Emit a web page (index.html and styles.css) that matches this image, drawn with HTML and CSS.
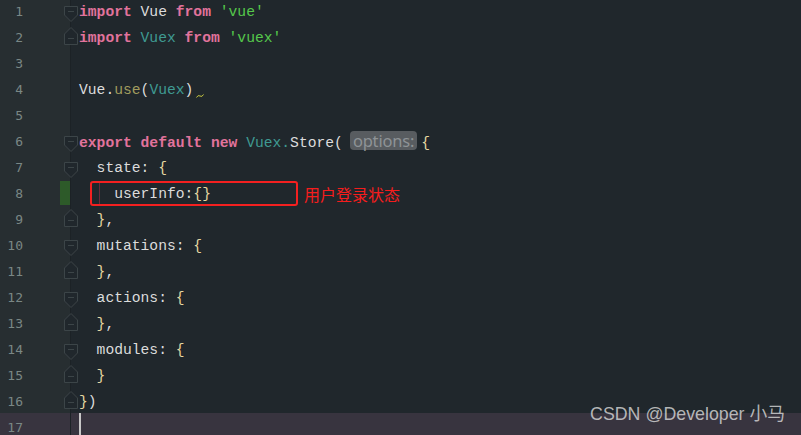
FILE: index.html
```html
<!DOCTYPE html>
<html lang="zh-CN">
    <head>
        <meta charset="UTF-8" />
        <meta name="viewport" content="width=device-width, initial-scale=1.0" />
        <title>store/index.js</title>
        <link rel="stylesheet" href="styles.css">
    </head>

    <body>
        <div class="editor">
            <div class="row">
                <div class="gutter"><span class="num">1</span><span class="fold fold_open"></span></div>
                <div class="code"><span class="kw">import</span> Vue <span class="kw">from</span> <span class="str">'vue'</span></div>
            </div>
            <div class="row">
                <div class="gutter"><span class="num">2</span><span class="fold fold_close"></span></div>
                <div class="code"><span class="kw">import</span> <span class="cls">Vuex</span> <span class="kw">from</span> <span class="str">'vuex'</span></div>
            </div>
            <div class="row">
                <div class="gutter"><span class="num">3</span></div>
                <div class="code"></div>
            </div>
            <div class="row">
                <div class="gutter"><span class="num">4</span></div>
                <div class="code">Vue.<span class="fn">use</span>(<span class="cls">Vuex</span>)<span class="warn"></span></div>
            </div>
            <div class="row">
                <div class="gutter"><span class="num">5</span></div>
                <div class="code"></div>
            </div>
            <div class="row">
                <div class="gutter"><span class="num">6</span><span class="fold fold_open"></span></div>
                <div class="code"><span class="kw">export default new</span> <span class="cls">Vuex.</span>Store(<span class="hint">options:</span><span class="br">{</span></div>
            </div>
            <div class="row">
                <div class="gutter"><span class="num">7</span><span class="fold fold_open"></span></div>
                <div class="code">  state: <span class="br">{</span></div>
            </div>
            <div class="row">
                <div class="gutter"><span class="num">8</span><span class="changed"></span></div>
                <div class="code code_note"><span class="guide"></span>    userInfo:<span class="br">{}</span><span class="note_box"></span><span class="note_text">用户登录状态</span></div>
            </div>
            <div class="row">
                <div class="gutter"><span class="num">9</span><span class="fold fold_close"></span></div>
                <div class="code">  <span class="br">}</span>,</div>
            </div>
            <div class="row">
                <div class="gutter"><span class="num">10</span><span class="fold fold_open"></span></div>
                <div class="code">  mutations: <span class="br">{</span></div>
            </div>
            <div class="row">
                <div class="gutter"><span class="num">11</span><span class="fold fold_close"></span></div>
                <div class="code">  <span class="br">}</span>,</div>
            </div>
            <div class="row">
                <div class="gutter"><span class="num">12</span><span class="fold fold_open"></span></div>
                <div class="code">  actions: <span class="br">{</span></div>
            </div>
            <div class="row">
                <div class="gutter"><span class="num">13</span><span class="fold fold_close"></span></div>
                <div class="code">  <span class="br">}</span>,</div>
            </div>
            <div class="row">
                <div class="gutter"><span class="num">14</span><span class="fold fold_open"></span></div>
                <div class="code">  modules: <span class="br">{</span></div>
            </div>
            <div class="row">
                <div class="gutter"><span class="num">15</span><span class="fold fold_close"></span></div>
                <div class="code">  <span class="br">}</span></div>
            </div>
            <div class="row">
                <div class="gutter"><span class="num">16</span><span class="fold fold_close"></span></div>
                <div class="code"><span class="br">}</span>)</div>
            </div>
            <div class="row row_current">
                <div class="gutter"><span class="num">17</span></div>
                <div class="code"><span class="caret"></span></div>
            </div>
        </div>

        <div class="watermark">CSDN @Developer 小马</div>
    </body>
</html>
```

FILE: styles.css
```css
:root {
    --bg: #20272c;
    --gutter: #272e31;
    --current: #38343f;
    --fold: #3c4548;
}

body {
    margin: 0;
    background-color: var(--bg);
    overflow: hidden;
    height: 435px;
    position: relative;
}

.editor {
    margin-top: -3px;
}

.row {
    display: grid;
    grid-template-columns: 71px 1fr;
    height: 26px;
}

.gutter {
    position: relative;
    background-color: var(--gutter);
    border-right: 1px solid #1c2226;
}

.num {
    display: block;
    width: 23px;
    text-align: right;
    padding-top: 5px;
    line-height: 20px;
    font-family: "DejaVu Sans Mono", monospace;
    font-size: 13px;
    color: #7a8785;
}

.code {
    position: relative;
    padding-left: 8px;
    padding-top: 4px;
    line-height: 22px;
    font-family: "Liberation Mono", monospace;
    font-size: 14.67px;
    color: #dcdcdc;
    white-space: pre;
}

.row_current .gutter,
.row_current .code {
    background-color: var(--current);
}

/* syntax */
.kw {
    color: #e2739c;
    font-weight: bold;
}
.cls {
    color: #3f9a92;
}
.fn {
    color: #a29c5e;
}
.str {
    color: #55c84b;
}
.br {
    color: #e5d7a1;
}

.hint {
    display: inline-block;
    margin: 0 4px 0 7px;
    padding: 0 3px;
    height: 19px;
    line-height: 19px;
    border-radius: 4px;
    background-color: #585c60;
    color: #8e9396;
    font-family: "Noto Sans", sans-serif;
    font-size: 16.5px;
    letter-spacing: -0.2px;
    vertical-align: 0px;
}

.warn {
    display: inline-block;
    width: 8px;
    height: 4px;
    margin-left: 3px;
    vertical-align: -4px;
    background-image: url("data:image/svg+xml,%3Csvg xmlns='http://www.w3.org/2000/svg' width='8' height='4'%3E%3Cpath d='M0.5 3.5 Q2 0.5 4 2 Q6 3.5 7.5 0.5' fill='none' stroke='%23c8c840' stroke-width='1'/%3E%3C/svg%3E");
}

/* fold markers */
.fold {
    position: absolute;
    left: 64px;
    width: 14px;
    height: 18px;
    z-index: 1;
    background-repeat: no-repeat;
}
.fold_open {
    top: 9px;
    background-image: url("data:image/svg+xml,%3Csvg xmlns='http://www.w3.org/2000/svg' width='14' height='18'%3E%3Cpath d='M0.5 0.5 H13.5 V9 L7 15.5 L0.5 9 Z' fill='%2320272c' stroke='%233c4548'/%3E%3Cpath d='M4 5.5 H10' stroke='%233c4548'/%3E%3C/svg%3E");
}
.fold_close {
    top: 4px;
    background-image: url("data:image/svg+xml,%3Csvg xmlns='http://www.w3.org/2000/svg' width='14' height='18'%3E%3Cpath d='M7 0.5 L13.5 7 V17.5 H0.5 V7 Z' fill='%2320272c' stroke='%233c4548'/%3E%3Cpath d='M4 11.5 H10' stroke='%233c4548'/%3E%3C/svg%3E");
}

.changed {
    position: absolute;
    left: 60px;
    top: 2px;
    width: 10px;
    height: 25px;
    background-color: #2d5a29;
}

/* line 8 annotation */
.guide {
    position: absolute;
    left: 28px;
    top: 4px;
    width: 1px;
    height: 22px;
    background-color: #6a2c3c;
}

.note_box {
    position: absolute;
    left: 19px;
    top: 2px;
    width: 208px;
    height: 25px;
    box-sizing: border-box;
    border: 2px solid #f42020;
    border-radius: 3px;
}

.note_text {
    position: absolute;
    left: 233px;
    top: 4px;
    font-family: "Noto Sans CJK SC", sans-serif;
    font-size: 16px;
    line-height: 22px;
    color: #f51d1d;
}

.caret {
    display: inline-block;
    width: 2px;
    height: 22px;
    margin-top: -4px;
    vertical-align: top;
    background-color: #c8c8c8;
}

.watermark {
    position: absolute;
    right: 16px;
    bottom: 10px;
    font-family: "Liberation Sans", "Noto Sans CJK SC", sans-serif;
    font-size: 17.8px;
    color: rgb(214 214 214 / 0.82);
}
```
